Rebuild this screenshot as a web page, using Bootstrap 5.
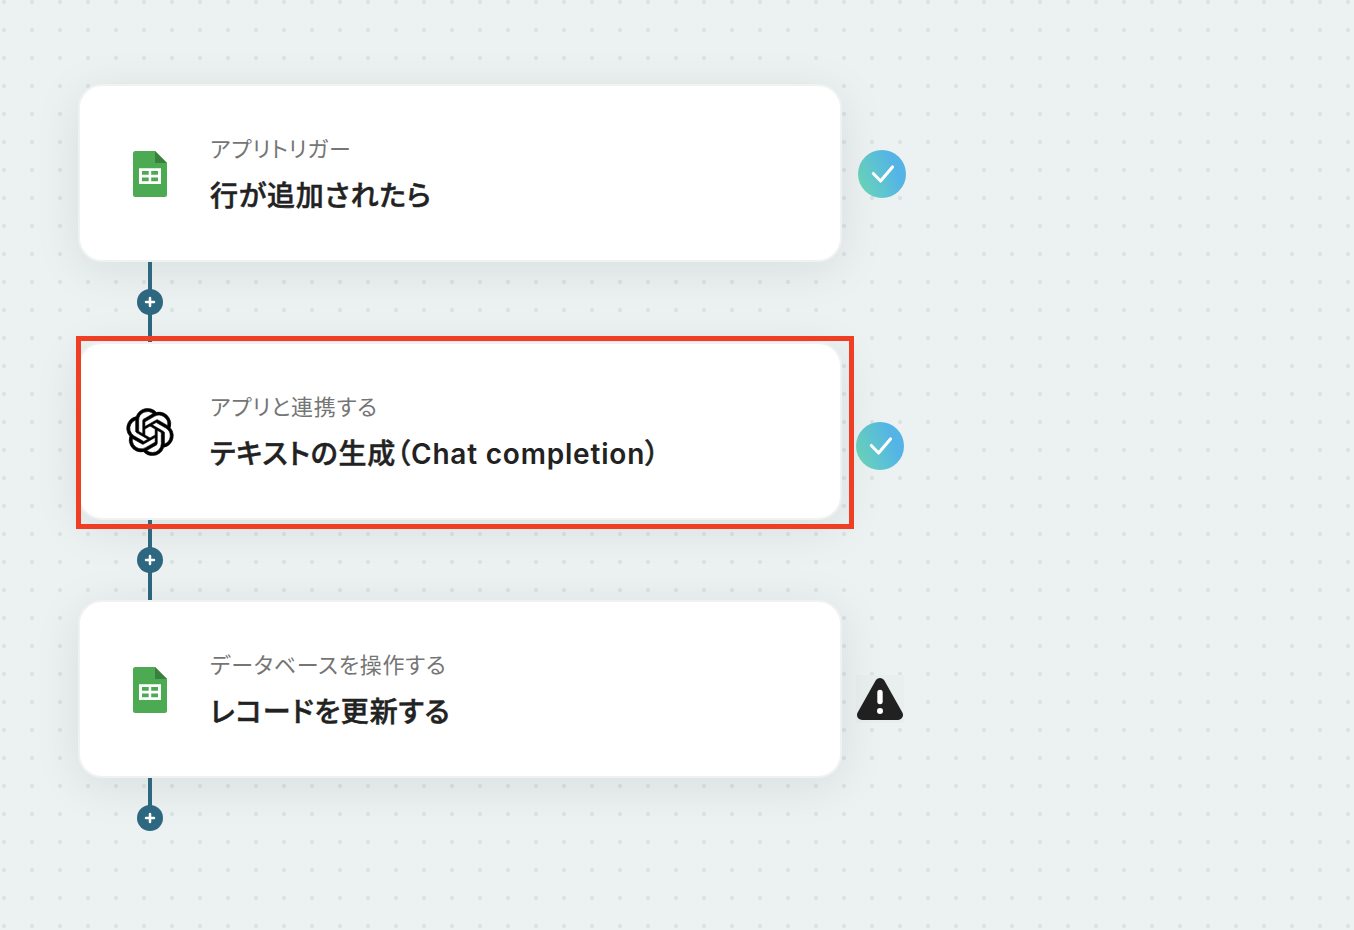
<!DOCTYPE html>
<html lang="ja">
<head>
  <meta charset="UTF-8">
  <meta name="viewport" content="width=device-width, initial-scale=1">
  <title>フロー</title>
  <link href="https://cdn.jsdelivr.net/npm/bootstrap@5.3.0/dist/css/bootstrap.min.css" rel="stylesheet">

  <style>
    /* Dotted canvas */
    body {
      font-family: Inter, "Noto Sans CJK JP", sans-serif;
      font-feature-settings: "palt";
      color: #222;
      background: #ecf2f2 radial-gradient(circle at 4px 2px, #dbe2e1 1.8px, transparent 2.4px) 0 0 / 28px 28px;
      height: 930px;
      overflow: hidden;
    }
    .flow { padding: 84px 0 0 78px; }

    /* Step cards */
    .step-card {
      width: 764px;
      height: 178px;
      padding: 0 46px;
      border: 2px solid #f0f2f2;
      border-radius: 24px;
      background-clip: border-box;
      box-shadow: 0 8px 48px rgba(0, 20, 20, .085);
    }
    .step-icon { width: 48px; height: 48px; margin-top: 2px; }
    .step-text { margin-left: 36px; padding-top: 2px; }
    .step-label {
      font-size: 22px;
      line-height: 36px;
      color: #757575;
      letter-spacing: .75px;
    }
    .step-title {
      font-size: 28px;
      line-height: 42px;
      font-weight: 500;
      letter-spacing: .8px;
      margin-top: 8px;
      -webkit-text-stroke: .5px #222;
    }
    .step-title span { -webkit-text-stroke: 0; }

    /* Connector between the cards */
    .connector {
      width: 144px;
      height: 80px;
    }
    .connector .line { width: 4px; background: #2d6780; }
    .connector.last { height: 53px; }
    .connector.last .line { height: 30px; }
    .add-btn { left: 59px; top: 27px; width: 26px; height: 26px; }

    /* Status badges */
    .status { width: 48px; height: 48px; margin: 66px 0 0 16px; }
    .status-mid { margin: 80px 0 0 14px; }
    .status-warn { margin: 75px 0 0 14px; background: #e9eeee; }

    /* Red frame round the highlighted step */
    .highlight {
      left: -2px;
      top: -6px;
      width: 778px;
      height: 193px;
      border: 5px solid #ef3e23;
      z-index: 3;
    }
  </style>
</head>
<body>
  <!-- Shared icons -->
  <svg class="d-none">
    <symbol id="sheet" viewBox="0 0 48 48">
      <path fill="#4caa52" d="M9.500 1H29l12 12v31.500a2.500 2.500 0 0 1-2.500 2.500h-29A2.500 2.500 0 0 1 7 44.500v-41A2.500 2.500 0 0 1 9.500 1z"/>
      <path fill="#38803b" d="M29 1l12 12H29z"/>
      <path fill="#fff" fill-rule="evenodd" d="M13 18.200h22V34H13zM16 21v3.700h6.700V21zM25.200 21v3.700H32V21zM16 27.400v3.900h6.700v-3.900zM25.200 27.400v3.900H32v-3.900z"/>
    </symbol>
    <symbol id="plus" viewBox="0 0 26 26">
      <circle cx="13" cy="13" r="13" fill="#2d6780"/>
      <path d="M13 9v8M9 13h8" stroke="#fff" stroke-width="2.500" stroke-linecap="round"/>
    </symbol>
    <symbol id="check" viewBox="0 0 48 48">
      <circle cx="24" cy="24" r="24" fill="url(#checkFill)"/>
      <path d="M15.300 23.500l7.300 7.500L34.500 17" fill="none" stroke="#fff" stroke-width="3.100" stroke-linecap="round" stroke-linejoin="round"/>
    </symbol>
  </svg>
  <svg class="position-absolute" width="0" height="0">
    <defs>
      <linearGradient id="checkFill" x1="0" y1=".7" x2="1" y2=".3">
        <stop offset="0.050" stop-color="#6ad4bd"/>
        <stop offset="0.780" stop-color="#54b4e6"/>
      </linearGradient>
    </defs>
  </svg>

  <main class="flow">
    <!-- Trigger -->
    <div class="d-flex align-items-start">
      <div class="card step-card flex-row align-items-center">
        <svg class="step-icon"><use href="#sheet"/></svg>
        <div class="step-text">
          <div class="step-label">アプリトリガー</div>
          <div class="step-title">行が追加されたら</div>
        </div>
      </div>
      <svg class="status"><use href="#check"/></svg>
    </div>

    <div class="connector position-relative d-flex justify-content-center">
      <div class="line"></div>
      <svg class="add-btn position-absolute"><use href="#plus"/></svg>
    </div>

    <!-- Chat completion -->
    <div class="d-flex align-items-start position-relative">
      <div class="card step-card flex-row align-items-center">
        <svg class="step-icon" viewBox="-.2 -.2 24.400 24.400"><path stroke="#000" stroke-width=".3" d="M22.2819 9.8211a5.9847 5.9847 0 0 0-.5157-4.9108 6.0462 6.0462 0 0 0-6.5098-2.9A6.0651 6.0651 0 0 0 4.9807 4.1818a5.9847 5.9847 0 0 0-3.9977 2.9 6.0462 6.0462 0 0 0 .7427 7.0966 5.98 5.98 0 0 0 .511 4.9107 6.051 6.051 0 0 0 6.5146 2.9001A5.9847 5.9847 0 0 0 13.2599 24a6.0557 6.0557 0 0 0 5.7718-4.2058 5.9894 5.9894 0 0 0 3.9977-2.9001 6.0557 6.0557 0 0 0-.7475-7.0729zm-9.022 12.6081a4.4755 4.4755 0 0 1-2.8764-1.0408l.1419-.0804 4.7783-2.7582a.7948.7948 0 0 0 .3927-.6813v-6.7369l2.02 1.1686a.071.071 0 0 1 .038.052v5.5826a4.504 4.504 0 0 1-4.4945 4.4944zm-9.6607-4.1254a4.4708 4.4708 0 0 1-.5346-3.0137l.142.0852 4.783 2.7582a.7712.7712 0 0 0 .7806 0l5.8428-3.3685v2.3324a.0804.0804 0 0 1-.0332.0615L9.74 19.9502a4.4992 4.4992 0 0 1-6.1408-1.6464zM2.3408 7.8956a4.485 4.485 0 0 1 2.3655-1.9728V11.6a.7664.7664 0 0 0 .3879.6765l5.8144 3.3543-2.0201 1.1685a.0757.0757 0 0 1-.071 0l-4.8303-2.7865A4.504 4.504 0 0 1 2.3408 7.872zm16.5963 3.8558L13.1038 8.364 15.1192 7.2a.0757.0757 0 0 1 .071 0l4.8303 2.7913a4.4944 4.4944 0 0 1-.6765 8.1042v-5.6772a.79.79 0 0 0-.407-.667zm2.0107-3.0231l-.142-.0852-4.7735-2.7818a.7759.7759 0 0 0-.7854 0L9.409 9.2297V6.8974a.0662.0662 0 0 1 .0284-.0615l4.8303-2.7866a4.4992 4.4992 0 0 1 6.6802 4.66zM8.3065 12.863l-2.02-1.1638a.0804.0804 0 0 1-.038-.0567V6.0742a4.4992 4.4992 0 0 1 7.3757-3.4537l-.142.0805L8.704 5.459a.7948.7948 0 0 0-.3927.6813zm1.0976-2.3654l2.602-1.4998 2.6069 1.4998v2.9994l-2.5974 1.4997-2.6067-1.4997Z"/></svg>
        <div class="step-text">
          <div class="step-label">アプリと連携する</div>
          <div class="step-title">テキストの生成（<span class="fw-semibold">Chat completion</span>）</div>
        </div>
      </div>
      <svg class="status status-mid"><use href="#check"/></svg>
      <div class="highlight position-absolute"></div>
    </div>

    <div class="connector position-relative d-flex justify-content-center">
      <div class="line"></div>
      <svg class="add-btn position-absolute"><use href="#plus"/></svg>
    </div>

    <!-- Database update -->
    <div class="d-flex align-items-start">
      <div class="card step-card flex-row align-items-center">
        <svg class="step-icon"><use href="#sheet"/></svg>
        <div class="step-text">
          <div class="step-label">データベースを操作する</div>
          <div class="step-title">レコードを更新する</div>
        </div>
      </div>
      <svg class="status status-warn" viewBox="0 0 48 48">
        <path d="M24 8L42 40H6z" fill="#212121" stroke="#212121" stroke-width="10" stroke-linejoin="round"/>
        <path d="M24 17.500v9" stroke="#fff" stroke-width="5.400" stroke-linecap="round"/>
        <circle cx="24" cy="36" r="3" fill="#fff"/>
      </svg>
    </div>

    <div class="connector last position-relative d-flex justify-content-center">
      <div class="line"></div>
      <svg class="add-btn position-absolute"><use href="#plus"/></svg>
    </div>
  </main>

  <script src="https://cdn.jsdelivr.net/npm/bootstrap@5.3.0/dist/js/bootstrap.bundle.min.js"></script>
</body>
</html>
